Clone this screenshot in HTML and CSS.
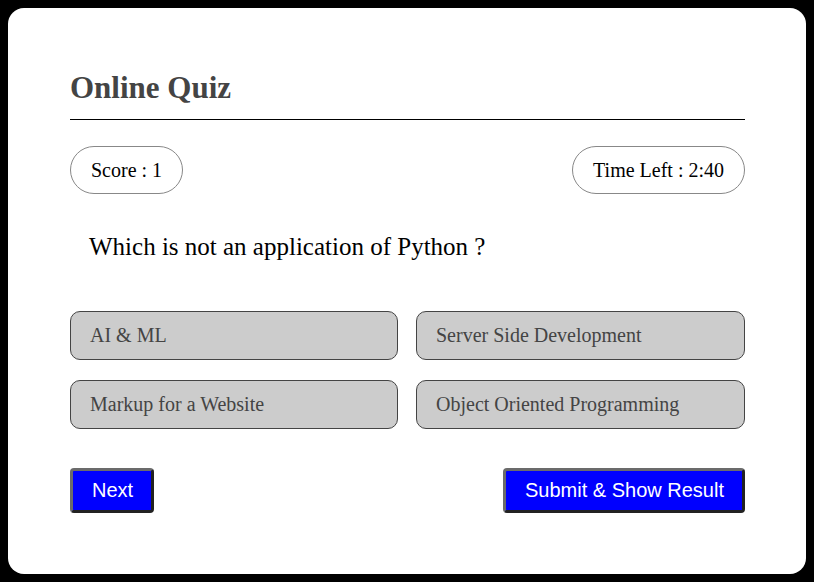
FILE: index.html
```html
<!DOCTYPE html>
<html>
<head>
<meta charset="utf-8">
<link rel="stylesheet" href="styles.css">
</head>
<body>
<div class="card">
  <h1 class="title">Online Quiz</h1>
  <div class="stats">
    <div class="pill">Score : 1</div>
    <div class="pill">Time Left : 2:40</div>
  </div>
  <p class="question">Which is not an application of Python ?</p>
  <div class="options">
    <div class="option">AI &amp; ML</div>
    <div class="option">Server Side Development</div>
    <div class="option">Markup for a Website</div>
    <div class="option">Object Oriented Programming</div>
  </div>
  <div class="actions">
    <button class="btn">Next</button>
    <button class="btn">Submit &amp; Show Result</button>
  </div>
</div>
</body>
</html>
```
FILE: styles.css
```css
html, body {
  margin: 0;
  padding: 0;
  background: #000;
}
body {
  padding: 8px;
  font-family: "Liberation Serif", "Times New Roman", serif;
}
.card {
  background: #fff;
  border-radius: 16px;
  height: 566px;
  box-sizing: border-box;
  padding: 62px 61px 62px 62px;
}
.title {
  margin: 0;
  font-size: 31px;
  line-height: 36px;
  font-weight: bold;
  color: #444;
  padding-bottom: 13px;
  border-bottom: 1px solid #000;
}
.stats {
  display: flex;
  justify-content: space-between;
  margin-top: 26px;
}
.pill {
  border: 1px solid #888;
  border-radius: 24px;
  padding: 12px 20px;
  font-size: 20px;
  line-height: 22px;
  color: #000;
}
.question {
  margin: 0;
  padding: 0 0 0 19px;
  font-size: 25px;
  line-height: 28px;
  margin-top: 39px;
  color: #000;
}
.options {
  display: grid;
  grid-template-columns: 328px 329px;
  justify-content: space-between;
  row-gap: 20px;
  margin-top: 50px;
}
.option {
  background: #ccc;
  border: 1px solid #444;
  border-radius: 10px;
  padding: 12px 19px 12px;
  font-size: 20px;
  line-height: 23px;
  color: #444;
}
.actions {
  display: flex;
  justify-content: space-between;
  margin-top: 39px;
}
.btn {
  background: #0000ff;
  color: #fff;
  font-family: "Liberation Sans", Arial, sans-serif;
  font-size: 20px;
  line-height: 23px;
  padding: 8px 18px 8px 19px;
  border: 3px solid;
  border-color: #6b6b6b #222 #222 #6b6b6b;
  border-radius: 4px;
}
```
